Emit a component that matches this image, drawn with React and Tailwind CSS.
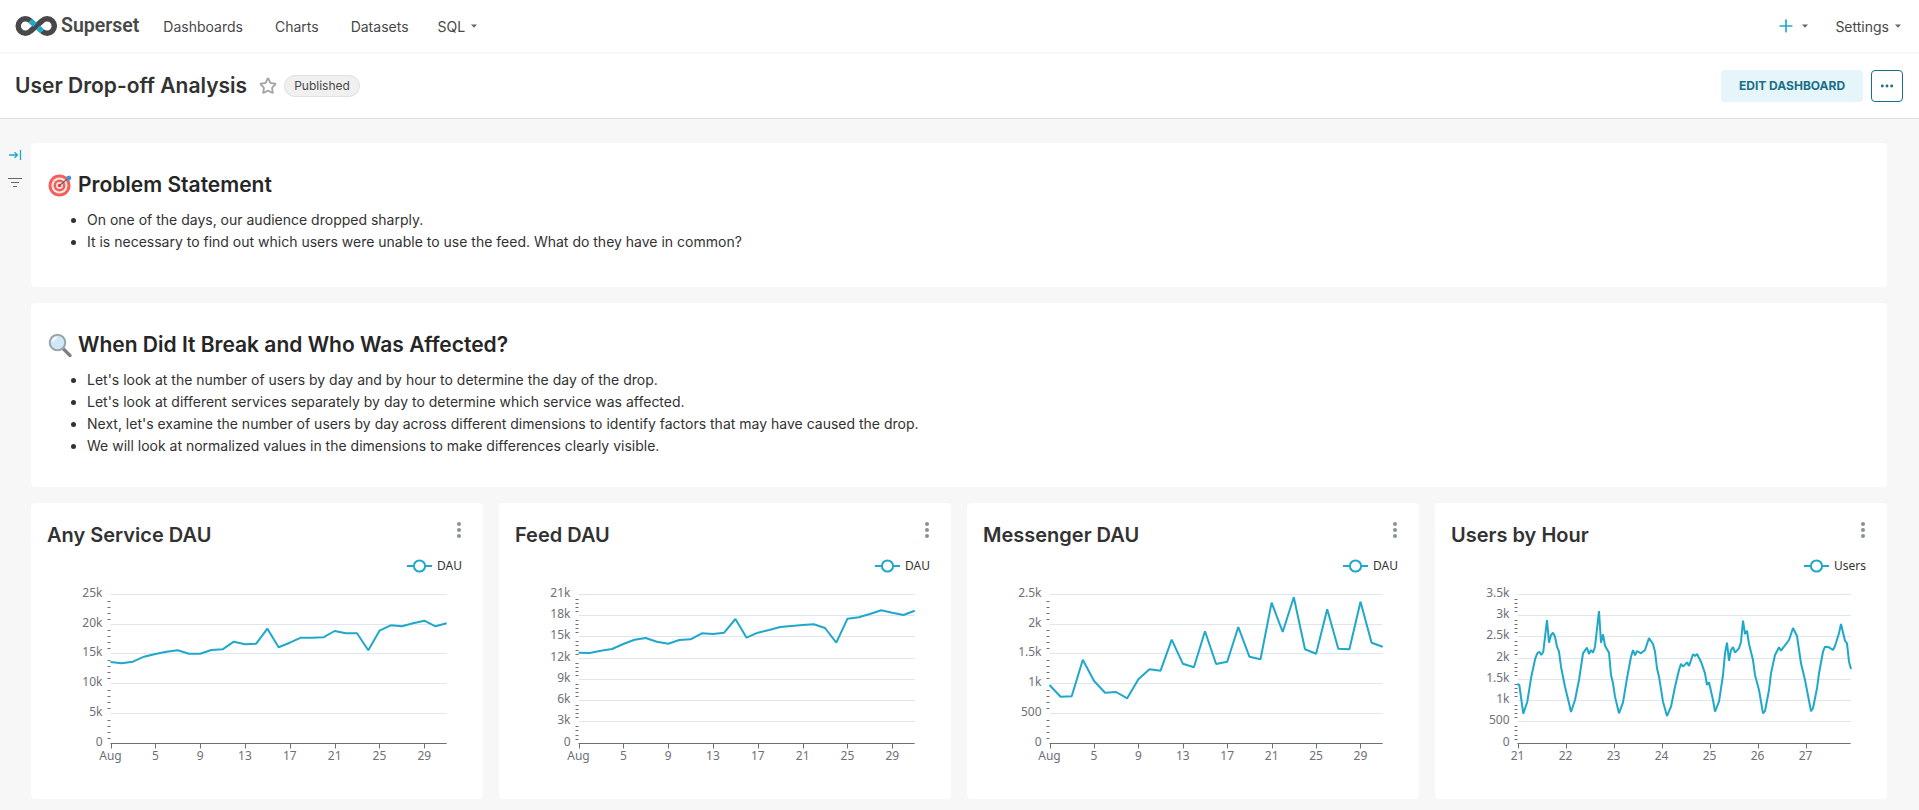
import React from 'react';
import { Plus, Star, MoreHorizontal } from 'lucide-react';

const LINE = '#1FA8C9';

const Caret = () => (
  <svg width="6" height="4" viewBox="0 0 6 4" className="ml-[6px]">
    <path d="M0 0.5h6L3 3.8z" fill="#666" />
  </svg>
);

const Logo = () => (
  <svg width="42" height="22" viewBox="14 12 42 22" fill="none" strokeWidth="5.5">
    <path d="M29.5 17.9A7.2 7.2 0 1 0 29.5 28.1L41 17.9A7.2 7.2 0 1 1 41 28.1" stroke="#484848" />
    <path d="M29.5 17.9L34 22M37 24.6L41 28.1" stroke={LINE} />
  </svg>
);

const TargetEmoji = () => (
  <svg width="24" height="24" viewBox="0 0 24 24" className="ml-px">
    <circle cx="11.5" cy="12.5" r="11" fill="#F4605C" />
    <circle cx="11.5" cy="12.5" r="8" fill="#FBE9E7" />
    <circle cx="11.5" cy="12.5" r="6" fill="#F4605C" />
    <circle cx="11.5" cy="12.5" r="3.4" fill="#FBE9E7" />
    <circle cx="11.5" cy="12.5" r="1.8" fill="#E8403C" />
    <path d="M12 12L20 5.5" stroke="#5A6B75" strokeWidth="1.2" />
    <path d="M18.5 3.5L22 2.5L23.5 5L22 7.5L19.5 7z" fill="#3B93D8" />
  </svg>
);

const SearchEmoji = () => (
  <svg width="24" height="24" viewBox="0 0 24 24" className="ml-px">
    <path d="M14.5 15L22 22.5" stroke="#7A8288" strokeWidth="3.2" strokeLinecap="round" />
    <circle cx="9.5" cy="9.5" r="7.8" fill="#CFE8F7" stroke="#9AA5AC" strokeWidth="2" />
    <path d="M5 8.5A5 5 0 0 1 9 4.5" stroke="#fff" strokeWidth="1.4" fill="none" />
  </svg>
);

const Markdown = ({ icon, title, items, className }) => (
  <div className={`bg-white rounded-[4px] px-4 ${className}`}>
    <h2 className="flex items-center gap-[6px] text-[21px] leading-[30px] font-semibold text-[#262626]">
      {icon}
      {title}
    </h2>
    <ul className="list-disc pl-[40px] mt-[9px] text-[14px] leading-[22px] text-[#323232]">
      {items.map((t) => (
        <li key={t}>{t}</li>
      ))}
    </ul>
  </div>
);

// zoomed reference rows -> svg rows
const toY = (v) => v / 3 - 54;

const Chart = ({ title, legend, x0, gridRows, yLabels, xLabels, points }) => {
  const x1 = 415.7;
  const baseY = 189.5;
  const gridY = gridRows.map((r) => Math.floor(toY(r)) + 0.5);
  const minor = [];
  gridY.slice(0, -1).forEach((y, i) => {
    const next = gridY[i + 1];
    for (let k = 1; k < 5; k++) minor.push(y + ((next - y) * k) / 5);
  });

  return (
    <div className="bg-white rounded-[4px] h-[296px] flex flex-col relative">
      <div className="h-[51px] flex justify-between pl-4 pr-[22px]">
        <h3 className="text-[20px] leading-[28px] font-semibold text-[#323232] mt-[18px]">{title}</h3>
        <svg width="4" height="16" viewBox="0 0 4 16" className="mt-[19px]">
          <circle cx="2" cy="2" r="2" fill="#879399" />
          <circle cx="2" cy="8" r="2" fill="#879399" />
          <circle cx="2" cy="14" r="2" fill="#879399" />
        </svg>
      </div>
      <svg width="452" height="245" className="block font-['Noto_Sans',sans-serif]">
        <g transform={`translate(${legend === 'Users' ? 369 : 376} 12)`}>
          <path d="M0 0h25" stroke={LINE} strokeWidth="2" />
          <circle cx="12.5" cy="0" r="5.6" fill="#fff" stroke={LINE} strokeWidth="2" />
          <text x="30" y="4" fontSize="12" fill="#333">{legend}</text>
        </g>
        {gridY.slice(0, -1).map((y) => (
          <path key={y} d={`M${x0} ${y}H${x1}`} stroke="#E0E6F1" />
        ))}
        {minor.map((y) => (
          <path key={y} d={`M${x0 - 3} ${Math.round(y) + 0.5}H${x0}`} stroke="#6E7079" />
        ))}
        {gridY.map((y, i) => (
          <text key={y} x={x0 - 8} y={y + 2.5} textAnchor="end" fontSize="12" fill="#6E7079">
            {yLabels[i]}
          </text>
        ))}
        <path d={`M${x0} ${baseY}H${x1}`} stroke="#6E7079" />
        {xLabels.map(([label, x]) => (
          <g key={label}>
            <path d={`M${Math.round(x) + 0.5} ${baseY}v5`} stroke="#6E7079" />
            <text x={x} y="206" textAnchor="middle" fontSize="12" fill="#6E7079">{label}</text>
          </g>
        ))}
        <polyline points={points.join(' ')} fill="none" stroke={LINE} strokeWidth="2" strokeLinejoin="bevel" />
      </svg>
    </div>
  );
};

const dayLabels = (x0) =>
  ['Aug', '5', '9', '13', '17', '21', '25', '29'].map((l, i) => [l, x0 + (i * 4 * (415.7 - x0)) / 30]);

const dayPoints = (x0, rows) =>
  rows.map((r, i) => `${(x0 + (i * (415.7 - x0)) / 30).toFixed(1)},${toY(r).toFixed(1)}`);

const hourRaw = [
  262,552, 268,555, 280,641, 292,605, 304,530, 316,475, 322,460, 328,455, 334,465, 340,455, 351,360, 357,428, 363,405, 369,398, 375,410,
  381,440, 387,455, 393,500, 405,560, 417,610, 423,636, 435,600, 447,540, 459,460, 471,443, 477,462, 483,450, 489,458, 495,440, 507,333,
  513,428, 519,403, 525,437, 537,458, 543,525, 549,550, 555,590, 567,640, 579,607, 591,535, 603,470, 609,450, 615,466, 621,453, 633,460,
  645,450, 657,414, 669,432, 675,455, 681,505, 687,530, 699,605, 711,648, 723,620, 735,560, 747,510, 753,491, 759,500, 771,487, 777,498,
  789,463, 795,468, 801,462, 813,485, 825,520, 831,555, 837,547, 849,600, 855,635, 867,605, 879,525, 885,460, 891,428, 897,482, 903,450,
  909,441, 915,458, 927,445, 933,425, 939,362, 945,402, 951,392, 957,432, 969,480, 975,525, 987,570, 999,640, 1005,633, 1017,570, 1023,520,
  1035,465, 1047,442, 1053,452, 1077,420, 1089,384, 1101,408, 1113,490, 1125,540, 1143,634, 1149,625, 1161,565, 1167,520, 1179,455, 1185,440,
  1197,442, 1209,450, 1215,438, 1227,400, 1233,372, 1245,422, 1251,430, 1257,485, 1263,507,
];
const hourPoints = [];
for (let i = 0; i < hourRaw.length; i += 2) {
  hourPoints.push(`${((hourRaw[i] - 262) / 3 + 82.3).toFixed(1)},${toY(hourRaw[i + 1]).toFixed(1)}`);
}

const rows5 = [283, 373, 460, 550, 640, 730];
const rows7 = [283, 346, 409, 475, 538, 601, 664, 730];

const charts = [
  {
    title: 'Any Service DAU',
    legend: 'DAU',
    x0: 79.5,
    gridRows: rows5,
    yLabels: ['25k', '20k', '15k', '10k', '5k', '0'],
    xLabels: dayLabels(79.5),
    points: dayPoints(79.5, [486, 490, 485, 470, 462, 455, 451, 461, 461, 450, 448, 425, 433, 431, 386, 442, 428, 413, 413, 412, 393, 400, 400, 451, 392, 376, 379, 370, 362, 379, 370]),
  },
  {
    title: 'Feed DAU',
    legend: 'DAU',
    x0: 79.5,
    gridRows: rows7,
    yLabels: ['21k', '18k', '15k', '12k', '9k', '6k', '3k', '0'],
    xLabels: dayLabels(79.5),
    points: dayPoints(79.5, [458, 459, 452, 447, 432, 419, 414, 425, 431, 420, 418, 400, 402, 398, 357, 413, 398, 390, 381, 378, 375, 373, 384, 428, 356, 352, 342, 331, 338, 345, 332]),
  },
  {
    title: 'Messenger DAU',
    legend: 'DAU',
    x0: 82.5,
    gridRows: rows5,
    yLabels: ['2.5k', '2k', '1.5k', '1k', '500', '0'],
    xLabels: dayLabels(82.5),
    points: dayPoints(82.5, [555, 590, 589, 479, 542, 578, 576, 595, 538, 508, 512, 419, 491, 502, 394, 492, 485, 381, 470, 478, 308, 396, 292, 448, 461, 328, 446, 448, 305, 428, 440]),
  },
  {
    title: 'Users by Hour',
    legend: 'Users',
    x0: 82.5,
    gridRows: rows7,
    yLabels: ['3.5k', '3k', '2.5k', '2k', '1.5k', '1k', '500', '0'],
    xLabels: ['21', '22', '23', '24', '25', '26', '27'].map((l, i) => [l, 82.5 + i * 48]),
    points: hourPoints,
  },
];

export default function App() {
  return (
    <div className="h-[810px] overflow-hidden bg-[#f7f7f7] font-[Inter,sans-serif] text-[#323232]">
      <nav className="h-[54px] bg-white border-b-2 border-[#f7f7f7] flex items-center pl-[15px] pr-[18px] text-[14px]">
        <Logo />
        <span className="ml-[4px] font-['Roboto',sans-serif] font-semibold text-[19.5px] text-[#484848]">Superset</span>
        <div className="flex items-center ml-[24px] text-[#484848]">
          <span>Dashboards</span>
          <span className="ml-[32px]">Charts</span>
          <span className="ml-[32px]">Datasets</span>
          <span className="ml-[29px] flex items-center">SQL<Caret /></span>
        </div>
        <div className="ml-auto flex items-center text-[#484848]">
          <Plus size={20} color={LINE} strokeWidth={2} />
          <Caret />
          <span className="ml-[27px]">Settings</span>
          <Caret />
        </div>
      </nav>

      <header className="h-[65px] bg-white border-b border-[#e0e0e0] flex items-center pl-[15px] pr-[16px]">
        <h1 className="text-[21px] font-semibold text-[#323232]">User Drop-off Analysis</h1>
        <Star size={18} className="ml-[12px]" color="#a3a3a3" strokeWidth={2.4} />
        <span className="ml-[7px] h-[22px] w-[76px] justify-center flex items-center rounded-full bg-[#f0f0f0] border border-[#e0e0e0] text-[12px] text-[#484848]">Published</span>
        <button className="ml-auto h-[32px] w-[142px] rounded-[4px] bg-[#E6F5F9] text-[#1A6F88] text-[12px] font-bold">EDIT DASHBOARD</button>
        <button className="ml-[8px] h-[32px] w-[32px] rounded-[4px] bg-white border border-[#1A6F88] flex items-center justify-center">
          <MoreHorizontal size={16} color="#1A6F88" strokeWidth={2.4} />
        </button>
      </header>

      <main className="flex">
        <aside className="w-[31px] shrink-0 flex flex-col items-center pt-[30px] pr-[2px]">
          <svg width="14" height="12" viewBox="0 0 14 12" fill="none" stroke={LINE} strokeWidth="1.3">
            <path d="M1 6h8M6.5 3.2L9.5 6L6.5 8.8M12.5 1v10" />
          </svg>
          <svg width="16" height="12" viewBox="0 0 16 12" fill="none" stroke="#666" strokeWidth="1.2" className="mt-[16px]">
            <path d="M1 1.5h14M4 5.5h8M6 9.5h4" />
          </svg>
        </aside>
        <div className="flex-1 pt-[24px] pr-[32px] flex flex-col gap-4">
          <Markdown
            icon={<TargetEmoji />}
            title="Problem Statement"
            className="h-[144px] pt-[27px]"
            items={[
              'On one of the days, our audience dropped sharply.',
              'It is necessary to find out which users were unable to use the feed. What do they have in common?',
            ]}
          />
          <Markdown
            icon={<SearchEmoji />}
            title="When Did It Break and Who Was Affected?"
            className="h-[184px] pt-[27px]"
            items={[
              "Let's look at the number of users by day and by hour to determine the day of the drop.",
              "Let's look at different services separately by day to determine which service was affected.",
              "Next, let's examine the number of users by day across different dimensions to identify factors that may have caused the drop.",
              'We will look at normalized values in the dimensions to make differences clearly visible.',
            ]}
          />
          <div className="grid grid-cols-4 gap-4">
            {charts.map((c) => (
              <Chart key={c.title} {...c} />
            ))}
          </div>
        </div>
      </main>
    </div>
  );
}
